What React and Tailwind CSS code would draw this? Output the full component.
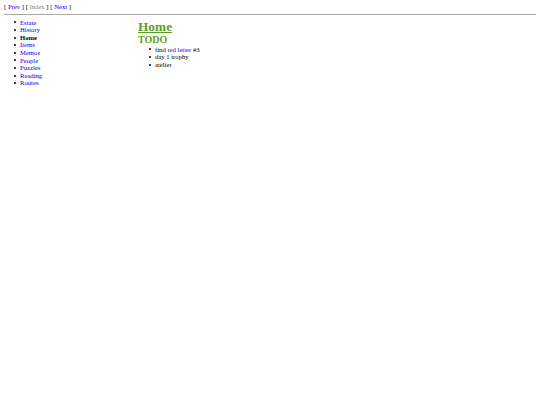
function Li({ children, className = "" }) {
  return (
    <li className={"flex items-center " + className}>
      <span className="mr-[4px] h-[2px] w-[2px] shrink-0 rounded-full bg-black" />
      <span>{children}</span>
    </li>
  );
}

export default function App() {
  const items = ["Estate", "History", "Home", "Items", "Memos", "People", "Puzzles", "Reading", "Routes"];
  return (
    <div className="min-h-screen bg-white px-[4px] pt-[3px] font-['Liberation_Serif',serif] text-[6.67px] leading-[7.6px] text-black">
      <div>
        [ <a className="text-[#0000ee]">Prev</a> ] [ <span className="text-[#888]">Index</span> ] [ <a className="text-[#0000ee]">Next</a> ]
      </div>
      <hr className="mt-[3px] mb-[3px] border-t border-[#aaa]" />
      <div className="flex">
        <ul className="w-[134px] shrink-0 pl-[10px] pt-[1px]">
          {items.map((it) =>
            it === "Home" ? (
              <Li key={it} className="font-bold">{it}</Li>
            ) : (
              <Li key={it}><a className="text-[#0000ee]">{it}</a></Li>
            )
          )}
        </ul>
        <div className="pt-[1px]">
          <h1 className="text-[13.33px] leading-[15px] font-bold text-[#5aa01e] underline">Home</h1>
          <h2 className="text-[10px] leading-[12px] font-bold text-[#5aa01e]">TODO</h2>
          <ul className="pl-[11px]">
            <Li>find <a className="text-[#0000ee]">red letter</a> #3</Li>
            <Li>day 1 trophy</Li>
            <Li>atelier</Li>
          </ul>
        </div>
      </div>
    </div>
  );
}
